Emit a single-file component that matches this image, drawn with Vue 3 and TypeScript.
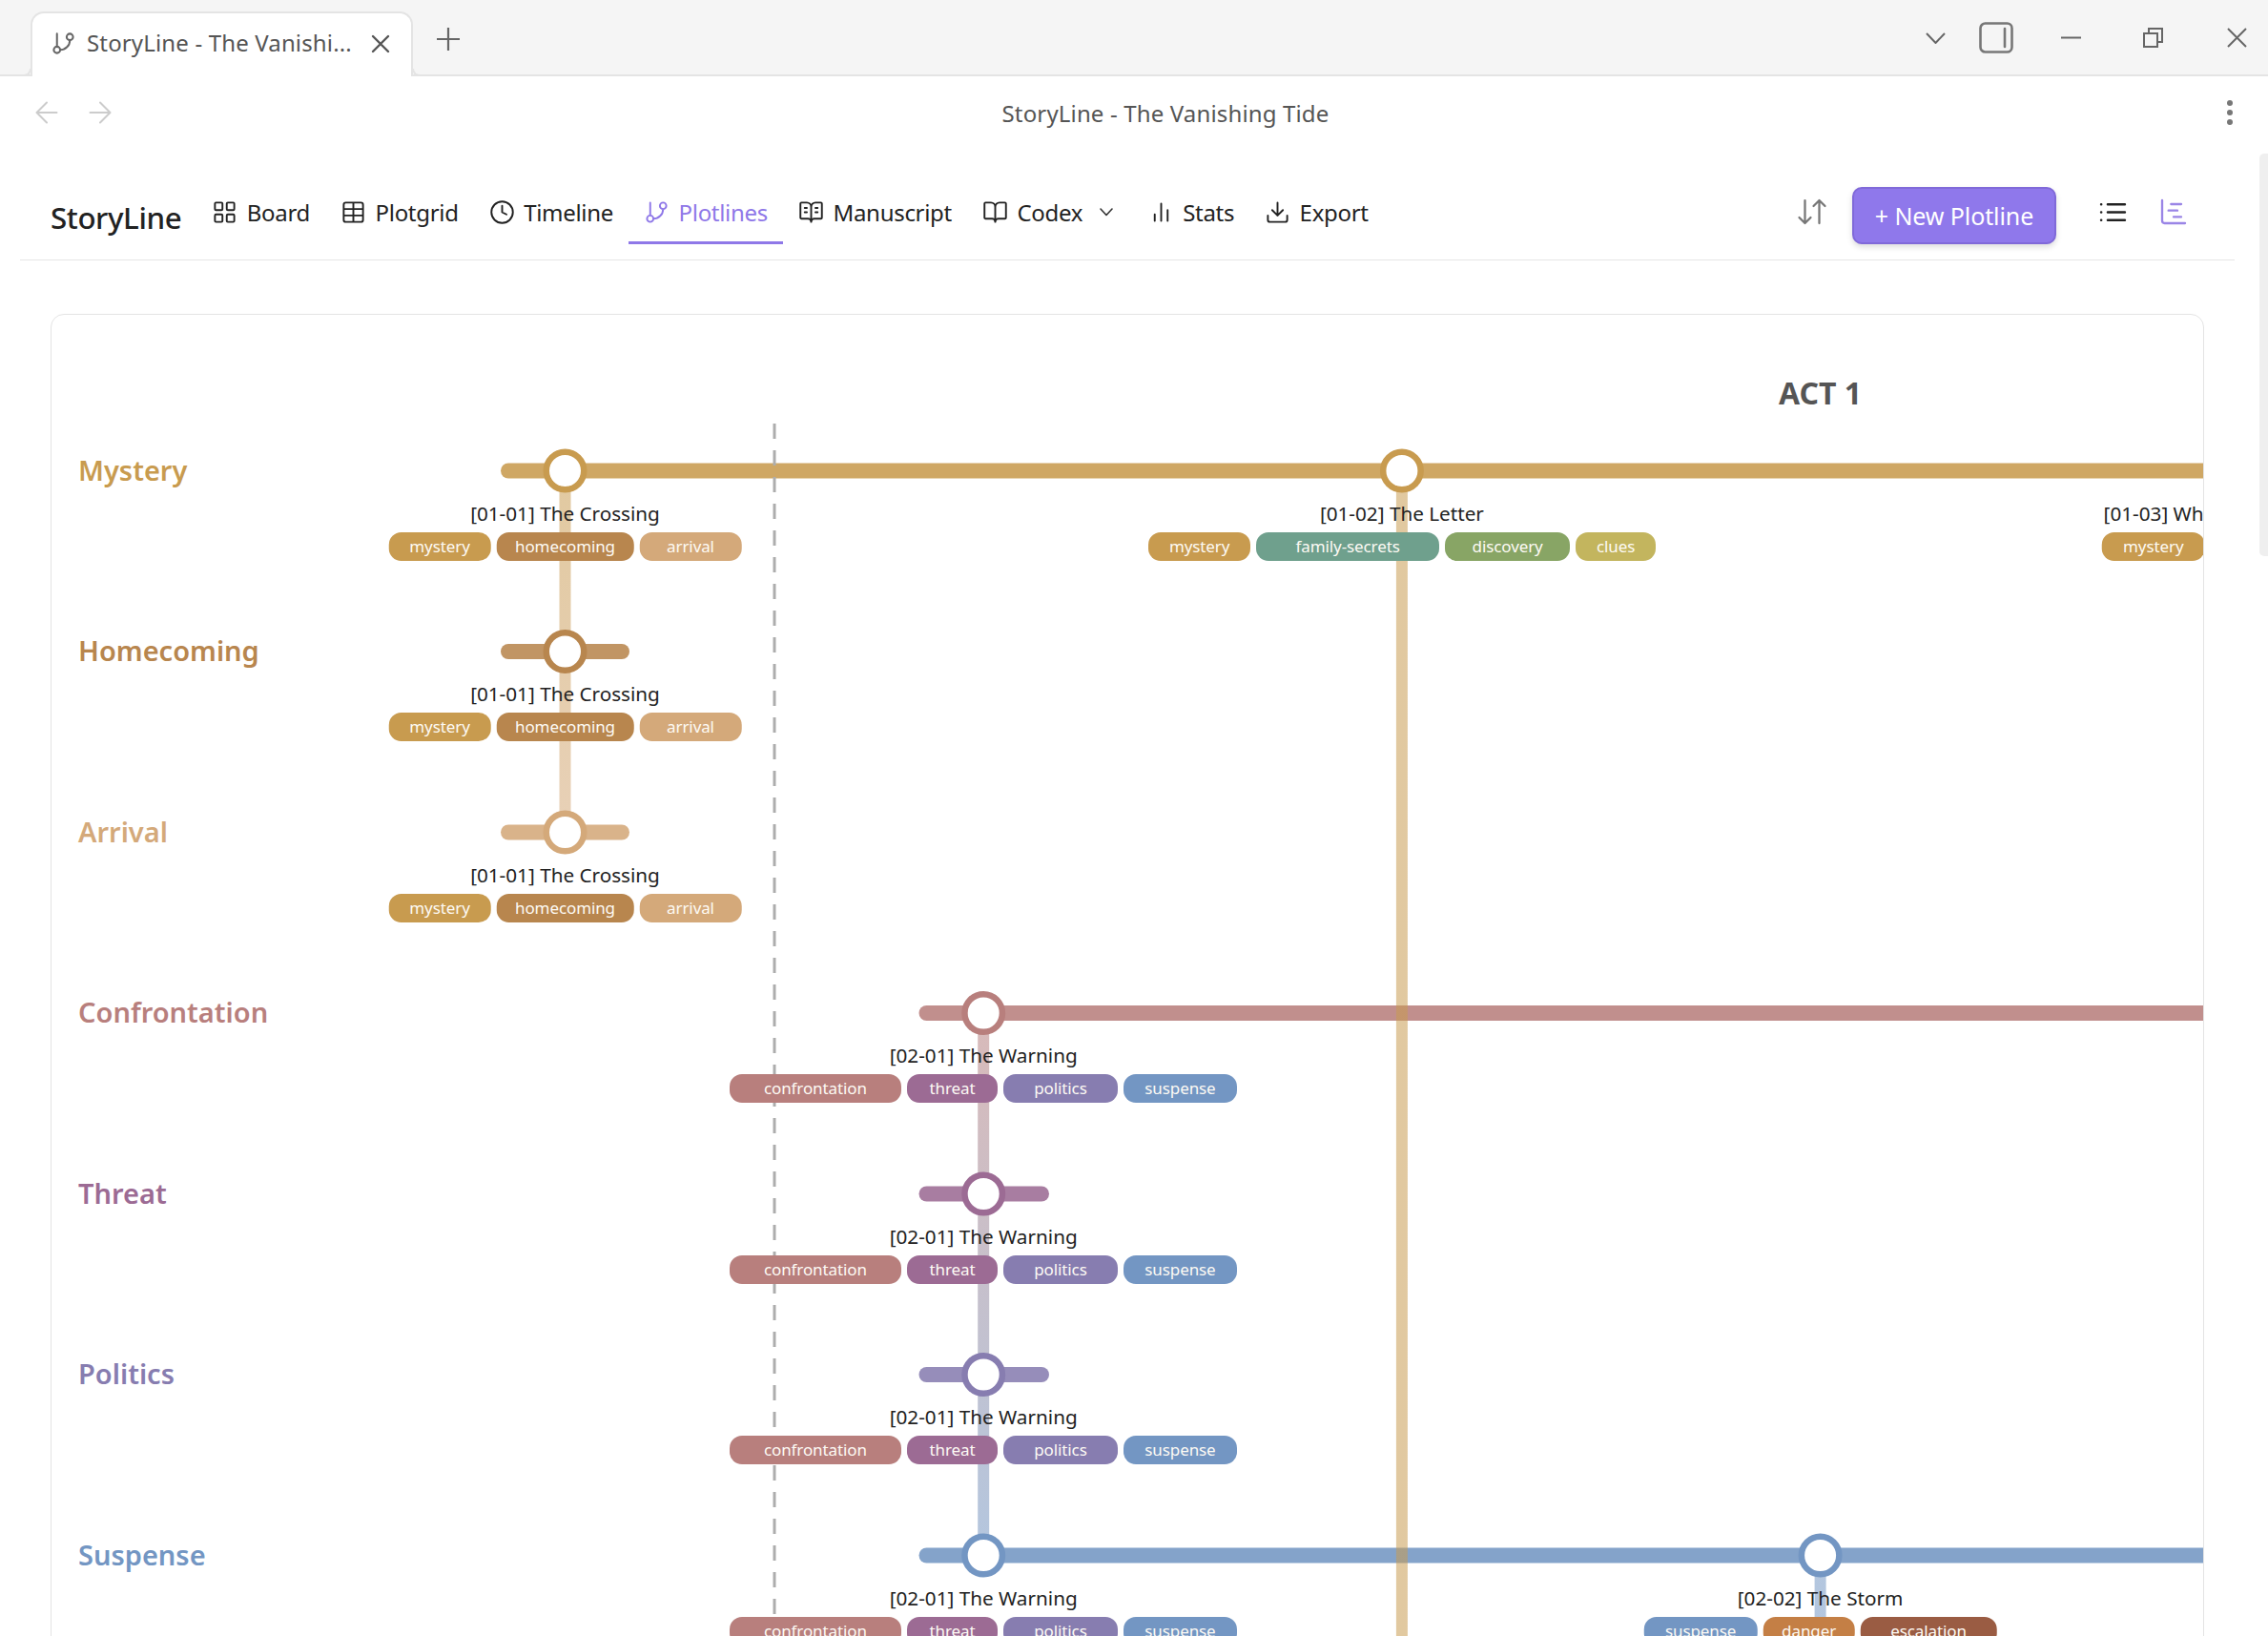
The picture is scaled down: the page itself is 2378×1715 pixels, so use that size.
<script setup lang="ts">
interface Lane { name: string; color: string; end: number | null; start: number }
interface Scene { col: number; lanes: string[]; label: string; tags: string[] }

const ORIGIN_X = 54
const ORIGIN_Y = 330
const COL0 = 592.5
const COL_STEP = 438.7
const LANE0 = 493.5
const LANE_STEP = 189.5
const CANVAS_W = 2256
const CANVAS_H = 1500

const colors: Record<string, string> = {
  mystery: '#c89b4f', homecoming: '#b8864e', arrival: '#d4a97a', confrontation: '#b87f7d',
  threat: '#9c6b94', politics: '#877db0', suspense: '#7396c3', 'family-secrets': '#6fa08d',
  discovery: '#88a565', clues: '#c3b55e', danger: '#c47f45', escalation: '#9a5c43', tides: '#6fa08d'
}

const lanes: Lane[] = [
  { name: 'Mystery', color: colors.mystery, start: 525, end: null },
  { name: 'Homecoming', color: colors.homecoming, start: 525, end: 660 },
  { name: 'Arrival', color: colors.arrival, start: 525, end: 660 },
  { name: 'Confrontation', color: colors.confrontation, start: 963.5, end: null },
  { name: 'Threat', color: colors.threat, start: 963.5, end: 1100 },
  { name: 'Politics', color: colors.politics, start: 963.5, end: 1100 },
  { name: 'Suspense', color: colors.suspense, start: 963.5, end: null }
]

const scenes: Scene[] = [
  { col: 0, lanes: ['Mystery', 'Homecoming', 'Arrival'], label: '[01-01] The Crossing', tags: ['mystery', 'homecoming', 'arrival'] },
  { col: 1, lanes: ['Confrontation', 'Threat', 'Politics', 'Suspense'], label: '[02-01] The Warning', tags: ['confrontation', 'threat', 'politics', 'suspense'] },
  { col: 2, lanes: ['Mystery'], label: '[01-02] The Letter', tags: ['mystery', 'family-secrets', 'discovery', 'clues'] },
  { col: 3, lanes: ['Suspense'], label: '[02-02] The Storm', tags: ['suspense', 'danger', 'escalation'] },
  { col: 4, lanes: ['Mystery'], label: '[01-03] What the Water Knew', tags: ['mystery', 'clues', 'tides'] }
]

const laneY = (name: string): number => LANE0 + LANE_STEP * lanes.findIndex(l => l.name === name) - ORIGIN_Y
const colX = (col: number): number => COL0 + COL_STEP * col - ORIGIN_X
const laneColor = (name: string): string => lanes.find(l => l.name === name)?.color ?? '#000'

const laneBars = lanes.map((l, i) => {
  const x = l.start - ORIGIN_X
  return {
    ...l,
    x,
    y: LANE0 + LANE_STEP * i - ORIGIN_Y,
    w: l.end === null ? CANVAS_W + 40 - x : l.end - l.start
  }
})

const connectors = [
  { id: 'c0', x: colX(0), y1: laneY('Mystery'), y2: laneY('Arrival'), from: colors.mystery, to: colors.arrival },
  { id: 'c1', x: colX(1), y1: laneY('Confrontation'), y2: laneY('Suspense'), from: colors.confrontation, to: colors.suspense },
  { id: 'c2', x: colX(2), y1: laneY('Mystery'), y2: CANVAS_H, from: colors.mystery, to: colors.mystery },
  { id: 'c3', x: colX(3), y1: laneY('Suspense'), y2: CANVAS_H, from: colors.suspense, to: colors.suspense }
]

const tagWidth = (t: string): number => 12 * t.length + 23.5

const placed = scenes.flatMap(s =>
  s.lanes.map(l => ({ key: s.label + l, x: colX(s.col), y: laneY(l), color: laneColor(l), label: s.label, tags: s.tags }))
)

const tagRowWidth = (tags: string[]): number =>
  tags.reduce((sum, t) => sum + tagWidth(t), 0) + 6 * (tags.length - 1)

const icons: Record<string, string> = {
  branch: 'M6 3v12M18 3a3 3 0 1 0 0 6 3 3 0 0 0 0-6zM6 15a3 3 0 1 0 0 6 3 3 0 0 0 0-6zM18 9a9 9 0 0 1-9 9',
  grid: 'M4 3h5a1 1 0 0 1 1 1v5a1 1 0 0 1-1 1H4a1 1 0 0 1-1-1V4a1 1 0 0 1 1-1zM15 3h5a1 1 0 0 1 1 1v5a1 1 0 0 1-1 1h-5a1 1 0 0 1-1-1V4a1 1 0 0 1 1-1zM15 14h5a1 1 0 0 1 1 1v5a1 1 0 0 1-1 1h-5a1 1 0 0 1-1-1v-5a1 1 0 0 1 1-1zM4 14h5a1 1 0 0 1 1 1v5a1 1 0 0 1-1 1H4a1 1 0 0 1-1-1v-5a1 1 0 0 1 1-1z',
  table: 'M5 3h14a2 2 0 0 1 2 2v14a2 2 0 0 1-2 2H5a2 2 0 0 1-2-2V5a2 2 0 0 1 2-2zM12 3v18M3 9h18M3 15h18',
  clock: 'M22 12a10 10 0 1 1-20 0 10 10 0 0 1 20 0zM12 6v6l4 2',
  bookText: 'M12 7v14M16 12h2M16 8h2M3 18a1 1 0 0 1-1-1V4a1 1 0 0 1 1-1h5a4 4 0 0 1 4 4 4 4 0 0 1 4-4h5a1 1 0 0 1 1 1v13a1 1 0 0 1-1 1h-6a3 3 0 0 0-3 3 3 3 0 0 0-3-3zM6 12h2M6 8h2',
  book: 'M12 7v14M3 18a1 1 0 0 1-1-1V4a1 1 0 0 1 1-1h5a4 4 0 0 1 4 4 4 4 0 0 1 4-4h5a1 1 0 0 1 1 1v13a1 1 0 0 1-1 1h-6a3 3 0 0 0-3 3 3 3 0 0 0-3-3z',
  bars: 'M18 20V10M12 20V4M6 20v-6',
  download: 'M21 15v4a2 2 0 0 1-2 2H5a2 2 0 0 1-2-2v-4M7 10l5 5 5-5M12 15V3',
  sort: 'M3 16l4 4 4-4M7 20V4M21 8l-4-4-4 4M17 4v16',
  list: 'M3 12h.01M3 18h.01M3 6h.01M8 12h13M8 18h13M8 6h13',
  gantt: 'M10 6h8M12 16h6M3 3v16a2 2 0 0 0 2 2h16M8 11h7'
}

const navItems = [
  { label: 'Board', icon: 'grid' },
  { label: 'Plotgrid', icon: 'table' },
  { label: 'Timeline', icon: 'clock' },
  { label: 'Plotlines', icon: 'branch', active: true },
  { label: 'Manuscript', icon: 'bookText' },
  { label: 'Codex', icon: 'book', caret: true },
  { label: 'Stats', icon: 'bars' },
  { label: 'Export', icon: 'download' }
]
</script>

<template>
  <div class="window">
    <header class="tabbar">
      <div class="tab">
        <svg class="tab-icon" viewBox="0 0 24 24"><path :d="icons.branch" /></svg>
        <span class="tab-title">StoryLine - The Vanishi...</span>
        <svg class="tab-close" viewBox="0 0 20 20"><path d="M2 2l16 16M18 2L2 18" /></svg>
      </div>
      <svg class="tab-plus" viewBox="0 0 24 24"><path d="M12 0v24M0 12h24" /></svg>
      <div class="controls">
        <svg class="ctl c-chevron" viewBox="0 0 21 12"><path d="M1 1l9.5 10L20 1" /></svg>
        <svg class="ctl c-panel" viewBox="0 0 36 33"><rect x="1.5" y="1.5" width="33" height="30" rx="5" /><path d="M27 7v19" /></svg>
        <svg class="ctl c-min" viewBox="0 0 21 3"><path d="M0 1.5h21" /></svg>
        <svg class="ctl c-restore" viewBox="0 0 21 21"><path d="M1 6h14v14H1zM6 6V1h14v14h-5" /></svg>
        <svg class="ctl c-close" viewBox="0 0 21 21"><path d="M1 1l19 19M20 1L1 20" /></svg>
      </div>
    </header>

    <div class="addressbar">
      <svg class="arrow" viewBox="0 0 24 24"><path d="M19 12H5M12 19l-7-7 7-7" /></svg>
      <svg class="arrow arrow-next" viewBox="0 0 24 24"><path d="M5 12h14M12 5l7 7-7 7" /></svg>
      <div class="page-title">StoryLine - The Vanishing Tide</div>
      <div class="dots"><i></i><i></i><i></i></div>
    </div>

    <main class="content">
      <nav class="nav">
        <div class="logo">StoryLine</div>
        <a v-for="item in navItems" :key="item.label" class="nav-item" :class="{ active: item.active }">
          <svg class="nav-icon" viewBox="0 0 24 24"><path :d="icons[item.icon]" /></svg>
          <span class="nav-text">{{ item.label }}</span>
          <svg v-if="item.caret" class="caret" viewBox="0 0 14 9"><path d="M1 1l6 6.5L13 1" /></svg>
        </a>
        <div class="nav-spacer"></div>
        <svg class="tool sort" viewBox="0 0 24 24"><path :d="icons.sort" /></svg>
        <button class="new-btn">+ New Plotline</button>
        <svg class="tool list" viewBox="0 0 24 24"><path :d="icons.list" /></svg>
        <svg class="tool gantt" viewBox="0 0 24 24"><path :d="icons.gantt" /></svg>
      </nav>

      <section class="card">
        <div class="canvas">
          <svg class="diagram" :viewBox="`0 0 ${CANVAS_W} ${CANVAS_H}`">
            <defs>
              <linearGradient v-for="c in connectors" :id="c.id" :key="c.id" gradientUnits="userSpaceOnUse" :x1="c.x" :x2="c.x" :y1="c.y1" :y2="c.y2">
                <stop offset="0" :stop-color="c.from" />
                <stop offset="1" :stop-color="c.to" />
              </linearGradient>
            </defs>
            <rect v-for="b in laneBars" :key="b.name" :x="b.x" :y="b.y - 8" :width="b.w" height="16" rx="8" :fill="b.color" opacity="0.88" />
            <line x1="758" x2="758" y1="114" :y2="CANVAS_H" class="dash" />
            <rect v-for="c in connectors" :key="c.id" :x="c.x - 6" :y="c.y1" width="12" :height="c.y2 - c.y1" :fill="`url(#${c.id})`" opacity="0.54" />
            <circle v-for="n in placed" :key="n.key" :cx="n.x" :cy="n.y" r="19.75" fill="#fff" :stroke="n.color" stroke-width="6.5" />
          </svg>

          <div class="act">ACT 1</div>

          <div v-for="b in laneBars" :key="b.name" class="lane-name" :style="{ top: `${b.y}px`, color: b.color }">{{ b.name }}</div>

          <div v-for="n in placed" :key="n.key + 'l'" class="scene" :style="{ left: `${n.x}px`, top: `${n.y}px` }">
            <div class="scene-label">{{ n.label }}</div>
            <div class="tag-row" :style="{ width: `${tagRowWidth(n.tags)}px` }">
              <span v-for="t in n.tags" :key="t" class="tag" :style="{ width: `${tagWidth(t)}px`, background: colors[t] }">{{ t }}</span>
            </div>
          </div>
        </div>
      </section>
    </main>

    <div class="scroll-thumb"></div>
  </div>
</template>

<style scoped>
.window {
  position: relative;
  width: 2378px;
  height: 1715px;
  overflow: hidden;
  background: #fff;
  font-family: "Noto Sans", "Open Sans", sans-serif;
  color: #222;
}
svg { fill: none; stroke-linecap: round; stroke-linejoin: round; display: block; }
.tabbar {
  display: flex;
  align-items: center;
  height: 80px;
  box-sizing: border-box;
  padding-left: 32px;
  background: #f5f5f5;
  border-bottom: 2px solid #e4e4e4;
}
.tab {
  position: relative;
  align-self: flex-end;
  display: flex;
  align-items: center;
  box-sizing: border-box;
  width: 401px;
  height: 68px;
  margin-bottom: -2px;
  padding: 0 22px 3px 19px;
  background: #fff;
  border: 2px solid #e4e4e4;
  border-bottom: none;
  border-radius: 14px 14px 0 0;
}
.tab::before,
.tab::after {
  content: "";
  position: absolute;
  bottom: 0;
  width: 8px;
  height: 8px;
  box-sizing: border-box;
  background: #f5f5f5;
  border-bottom: 2px solid #e4e4e4;
}
.tab::before { left: -9px; border-right: 2px solid #e4e4e4; border-bottom-right-radius: 8px; }
.tab::after { right: -9px; border-left: 2px solid #e4e4e4; border-bottom-left-radius: 8px; }
.tab-icon { width: 27px; height: 27px; stroke: #666; stroke-width: 1.8; flex: none; }
.tab-title { flex: 1; margin-left: 11px; font-size: 24px; line-height: 30px; margin-bottom: 2px; color: #555; white-space: nowrap; letter-spacing: 0.15px; }
.tab-close { width: 20px; height: 20px; stroke: #555; stroke-width: 2.4; flex: none; }
.tab-plus { width: 24px; height: 24px; margin: 3px 0 0 25px; stroke: #666; stroke-width: 2.2; stroke-linecap: butt; }
.controls { display: flex; align-items: center; margin-left: auto; padding-right: 22px; }
.ctl { stroke: #666; stroke-width: 2; stroke-linecap: butt; stroke-linejoin: miter; }
.c-chevron { width: 21px; height: 12px; margin-top: 2px; }
.c-panel { width: 36px; height: 33px; margin-left: 34.5px; stroke: #777; stroke-width: 2.6; }
.c-panel path { stroke-linecap: round; }
.c-min { width: 21px; height: 3px; margin-left: 50px; }
.c-restore { width: 21px; height: 21px; margin-left: 65.5px; }
.c-close { width: 21px; height: 21px; margin-left: 67px; }
.addressbar {
  display: flex;
  align-items: center;
  box-sizing: border-box;
  height: 80px;
  padding: 0 23.5px 4px 30.5px;
}
.arrow { width: 36px; height: 36px; stroke: #ccc; stroke-width: 1.35; flex: none; }
.arrow-next { margin-left: 20px; }
.page-title { flex: 1; text-align: center; font-size: 24px; color: #555; letter-spacing: 0.15px; }
.dots { width: 33px; display: flex; flex-direction: column; align-items: center; gap: 4px; }
.dots i { width: 6px; height: 6px; border-radius: 50%; background: #777; }
.content { padding: 36px 35px 0 21px; }
.nav {
  display: flex;
  align-items: flex-start;
  height: 76px;
  padding-left: 32px;
  border-bottom: 1.5px solid #e6e6e6;
  box-sizing: content-box;
}
.logo { font-size: 31.3px; font-weight: 500; color: #222; line-height: 60px; letter-spacing: -0.4px; margin-right: 16px; padding-top: 2px; white-space: nowrap; }
.nav-item {
  display: flex;
  align-items: center;
  gap: 9.5px;
  box-sizing: border-box;
  height: 60px;
  padding: 0 16px 5px;
  border-bottom: 3px solid transparent;
  font-size: 24px;
  letter-spacing: -0.3px;
  color: #222;
  white-space: nowrap;
}
.nav-item.active { color: #8f78e8; border-bottom-color: #8f78e8; }
.nav-icon { width: 27px; height: 27px; stroke: currentColor; stroke-width: 1.7; flex: none; }
.caret { width: 14px; height: 9px; margin: 0 4.5px 0 8.5px; stroke: #333; stroke-width: 1.6; }
.nav-spacer { flex: 1; }
.tool { flex: none; }
.sort { width: 36px; height: 36px; margin-top: 8px; stroke: #777; stroke-width: 1.5; }
.new-btn {
  width: 214px;
  height: 60px;
  margin-left: 24px;
  padding: 0;
  background: #8f78eb;
  border: 2px solid #8069d9;
  border-radius: 10px;
  box-shadow: 0 3px 6px rgba(0, 0, 0, 0.14);
  color: #fff;
  font: 400 25px "Noto Sans", sans-serif;
  letter-spacing: -0.1px;
}
.list { width: 33px; height: 33px; margin: 9.5px 0 0 43px; stroke: #222; stroke-width: 1.9; }
.gantt { width: 32px; height: 32px; margin: 10px 48px 0 31px; stroke: #9a85e6; stroke-width: 1.75; }
.card {
  margin: 55.5px 0 0 32px;
  width: 2258px;
  box-sizing: border-box;
  height: 1500px;
  border: 1px solid #e4e4e4;
  border-radius: 14px;
  overflow: hidden;
}
.canvas { position: relative; width: 2256px; height: 1500px; }
.diagram { position: absolute; left: 0; top: 0; width: 2256px; height: 1500px; }
.dash { stroke: #adadad; stroke-width: 3; stroke-dasharray: 16 12; stroke-linecap: butt; }
.act {
  position: absolute;
  left: 1854.5px;
  top: 81px;
  transform: translate(-50%, -50%);
  font-size: 32px;
  font-weight: 700;
  color: #555;
}
.lane-name {
  position: absolute;
  left: 28px;
  margin-top: -1.5px;
  transform: translateY(-50%);
  font-size: 29px;
  font-weight: 600;
  white-space: nowrap;
}
.scene { position: absolute; width: 0; height: 0; }
.scene-label {
  position: absolute;
  top: 44.5px;
  left: 0;
  transform: translate(-50%, -50%);
  font-size: 20.7px;
  line-height: 28px;
  color: #222;
  white-space: nowrap;
}
.tag-row {
  position: absolute;
  top: 64.5px;
  left: 0;
  transform: translateX(-50%);
  display: flex;
  gap: 6px;
}
.tag {
  flex: none;
  height: 30px;
  border-radius: 13px;
  text-align: center;
  line-height: 30px;
  font-size: 17px;
  letter-spacing: -0.1px;
  color: #fdfaf4;
  white-space: nowrap;
}
.scroll-thumb {
  position: absolute;
  top: 161px;
  right: 0;
  width: 9px;
  height: 422px;
  border-radius: 5px 0 0 5px;
  background: #efefef;
}
</style>

<style>
html, body { margin: 0; overflow: hidden; background: #fff; }
</style>
